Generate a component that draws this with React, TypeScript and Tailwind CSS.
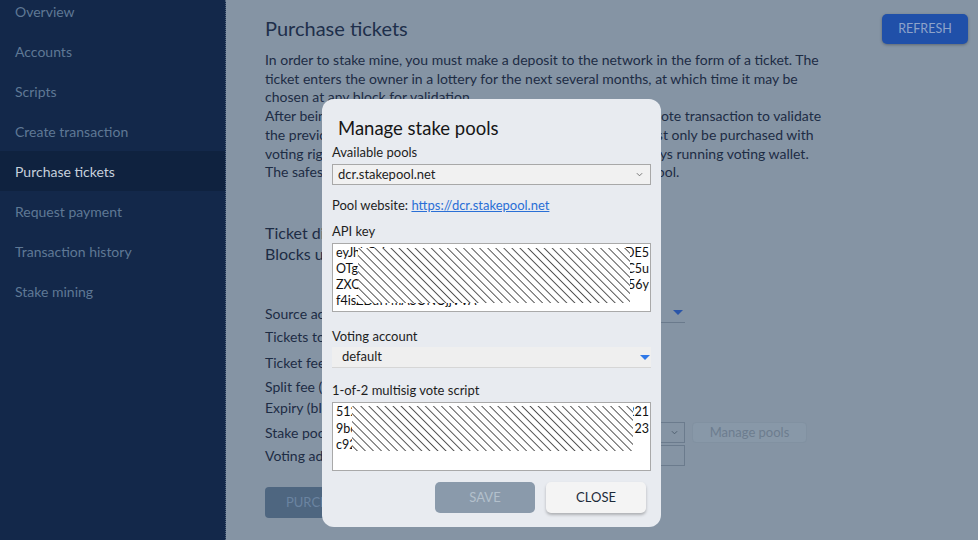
import React from "react"

// DATA
const NAV = [
    "Overview",
    "Accounts",
    "Scripts",
    "Create transaction",
    "Purchase tickets",
    "Request payment",
    "Transaction history",
    "Stake mining",
]

const INTRO = [
    "In order to stake mine, you must make a deposit to the network in the form of a ticket. The",
    "ticket enters the owner in a lottery for the next several months, at which time it may be",
    "chosen at any block for validation.",
    "After being chosen, the ticket holder must sign and broadcast a vote transaction to validate",
    "the previous block. Tickets are bought at the current fee and must only be purchased with",
    "voting rights delegated to a stake pool, or else to one's own always running voting wallet.",
    "The safest way to vote on your tickets is to use a trusted stake pool.",
]

const ROWS = [
    { label: "Source account:", h: "h-[23px]", control: "dropdown" },
    { label: "Tickets to buy:", h: "h-[23px]", control: "" },
    { label: "Ticket fee (DCR/kB):", h: "h-[29px]", control: "" },
    { label: "Split fee (DCR/kB):", h: "h-[19px]", control: "" },
    { label: "Expiry (blocks):", h: "h-[23px]", control: "" },
    { label: "Stake pool preference:", h: "h-[27px]", control: "select" },
    { label: "Voting address:", h: "h-[19px]", control: "input" },
]

// HATCH (redaction drawing)
function Hatch({ id, className }: { id: string; className: string }) {
    return (
        <svg className={className} preserveAspectRatio="none">
            <defs>
                <pattern id={id} width="5.7" height="5.7" patternUnits="userSpaceOnUse" patternTransform="rotate(-45)">
                    <rect width="5.7" height="5.7" fill="#ffffff" />
                    <line x1="0" y1="0" x2="0" y2="5.7" stroke="#000000" strokeWidth="1.3" />
                </pattern>
            </defs>
            <rect width="100%" height="100%" fill={`url(#${id})`} />
        </svg>
    )
}

function Chevron({ className }: { className: string }) {
    return (
        <svg className={className} viewBox="0 0 8 5" fill="none">
            <path d="M1 1 L4 4 L7 1" stroke="currentColor" strokeWidth="1" />
        </svg>
    )
}

function Triangle({ className }: { className: string }) {
    return (
        <svg className={className} viewBox="0 0 10 5">
            <path d="M0 0 H10 L5 5 Z" fill="currentColor" />
        </svg>
    )
}

export default function App() {

    return (

        <div className="relative w-[978px] h-[540px] overflow-hidden flex font-['Lato','Liberation_Sans',sans-serif]">

            {/* SIDEBAR */}
            <div className="w-[226px] h-full bg-[#13284a] border-r border-dotted border-[#55677f] shrink-0">
                <div className="-mt-[9px]">
                    {NAV.map((item) => (
                        <div
                            key={item}
                            className={`h-10 flex items-center pl-[15px] text-[14px] ${item === "Purchase tickets" ? "bg-[#0f223f] text-[#c6d0dc]" : "text-[#5f7895]"}`}
                        >
                            {item}
                        </div>
                    ))}
                </div>
            </div>

            {/* MAIN (dimmed by modal backdrop) */}
            <div className="flex-1 h-full bg-[#8594a4] pl-[39px] pr-[10px] text-[#1d2c44]">

                {/* HEADER */}
                <div className="flex justify-between items-start">
                    <div className="mt-[14px] text-[20px] leading-[28px] text-[#1e2f4b]">Purchase tickets</div>
                    <button className="mt-[14px] w-[86px] h-[30px] rounded-[5px] bg-[#2050a9] text-[#8ea3c9] text-[12.5px] shadow-[0_1px_3px_rgba(0,0,0,0.3)]">
                        REFRESH
                    </button>
                </div>

                {/* INTRO */}
                <div className="mt-[7px] text-[14px] leading-[18.7px]">
                    {INTRO.map((line) => (
                        <div key={line} className="whitespace-nowrap">{line}</div>
                    ))}
                </div>

                {/* TICKET INFO */}
                <div className="mt-[40px] text-[16px] leading-[21px]">
                    <div>Ticket difficulty: 98.47 DCR</div>
                    <div>Blocks until retarget: 112</div>
                </div>

                {/* FORM */}
                <div className="mt-[38px] text-[14px]">
                    {ROWS.map((row) => (
                        <div key={row.label} className={`${row.h} flex items-center`}>
                            <div className="w-[150px] shrink-0 whitespace-nowrap">{row.label}</div>
                            {row.control === "dropdown" && (
                                <div className="w-[270px] h-[20px] border-b border-[#6a7a8c] flex items-center justify-end pr-[2px] text-[#2a55a8]">
                                    <Triangle className="w-[10px] h-[5px]" />
                                </div>
                            )}
                            {row.control === "select" && (
                                <div className="flex items-center gap-[7px]">
                                    <div className="w-[270px] h-[21px] border border-[#6b7b8d] flex items-center justify-end pr-[6px] text-[#4a5a6b]">
                                        <Chevron className="w-[7px] h-[5px]" />
                                    </div>
                                    <div className="w-[115px] h-[21px] rounded-[4px] border border-[#8191a1] bg-[#8898a8] flex items-center justify-center text-[13px] text-[#6d7d8f]">
                                        Manage pools
                                    </div>
                                </div>
                            )}
                            {row.control === "input" && (
                                <div className="w-[270px] h-[21px] border border-[#6b7b8d]" />
                            )}
                        </div>
                    ))}
                </div>

                {/* PURCHASE */}
                <button className="mt-[22px] w-[130px] h-[31px] rounded-[4px] bg-[#4e6680] text-[#6b84a1] text-[13px] text-left pl-[21px]">
                    PURCHASE
                </button>
            </div>

            {/* MODAL */}
            <div className="absolute left-[322px] top-[99px] w-[339px] h-[428px] rounded-[12px] bg-[#e8ebf0] px-[10px] pt-[17px] text-[13px] text-[#1e1e1e]">

                <div className="pl-[6px] text-[18.5px] leading-[24px] text-[#161616]">Manage stake pools</div>

                <div className="mt-[4px] leading-[16px]">Available pools</div>
                <div className="mt-[4px] h-[21px] border border-[#a8a8a8] bg-[#f1f1f1] flex items-center justify-between pl-[5px] pr-[7px]">
                    <span>dcr.stakepool.net</span>
                    <Chevron className="w-[7px] h-[5px] text-[#666]" />
                </div>

                <div className="mt-[12px] leading-[16px]">
                    Pool website: <span className="text-[#2a6fd6] underline">https://dcr.stakepool.net</span>
                </div>

                <div className="mt-[10px] leading-[16px]">API key</div>
                <div className="relative mt-[4px] h-[69px] bg-white border border-[#a9a9a9] pl-[3px] pr-[1px] pt-[1px] text-[12.5px] leading-[16px] text-[#111]">
                    <div className="flex justify-between"><span>eyJhbGci</span><span>DE5</span></div>
                    <div className="flex justify-between"><span>OTgzN</span><span>C5u</span></div>
                    <div className="flex justify-between"><span>ZXQi</span><span>56y</span></div>
                    <div>f4isZDaTl mASONOjjVVA</div>
                    <Hatch id="hatch-api" className="absolute left-[25px] top-[4px] w-[272px] h-[55px]" />
                </div>

                <div className="mt-[16px] leading-[16px]">Voting account</div>
                <div className="mt-[3px] h-[21px] bg-[#efefef] border-b border-[#d6d6d6] flex items-center justify-between pl-[10px] pr-[1px]">
                    <span>default</span>
                    <Triangle className="w-[10px] h-[5px] text-[#2f78e8]" />
                </div>

                <div className="mt-[14px] leading-[16px]">1-of-2 multisig vote script</div>
                <div className="relative mt-[4px] h-[69px] bg-white border border-[#a9a9a9] pl-[3px] pr-[1px] pt-[1px] text-[12.5px] leading-[16.5px] text-[#111]">
                    <div className="flex justify-between"><span>512103</span><span>221</span></div>
                    <div className="flex justify-between"><span>9b6</span><span>23</span></div>
                    <div>c92</div>
                    <Hatch id="hatch-script" className="absolute left-[19px] top-[3px] w-[281px] h-[45px]" />
                </div>

                <div className="mt-[11px] flex justify-end gap-[11px] pr-[5px]">
                    <button className="w-[100px] h-[31px] rounded-[5px] bg-[#8a9aab] text-[#b3c0cc] text-[13px]">SAVE</button>
                    <button className="w-[100px] h-[31px] rounded-[5px] bg-[#f4f4f4] text-[#1c2a3a] text-[13px] shadow-[0_2px_3px_rgba(0,0,0,0.25)]">CLOSE</button>
                </div>
            </div>
        </div>
    )
}
